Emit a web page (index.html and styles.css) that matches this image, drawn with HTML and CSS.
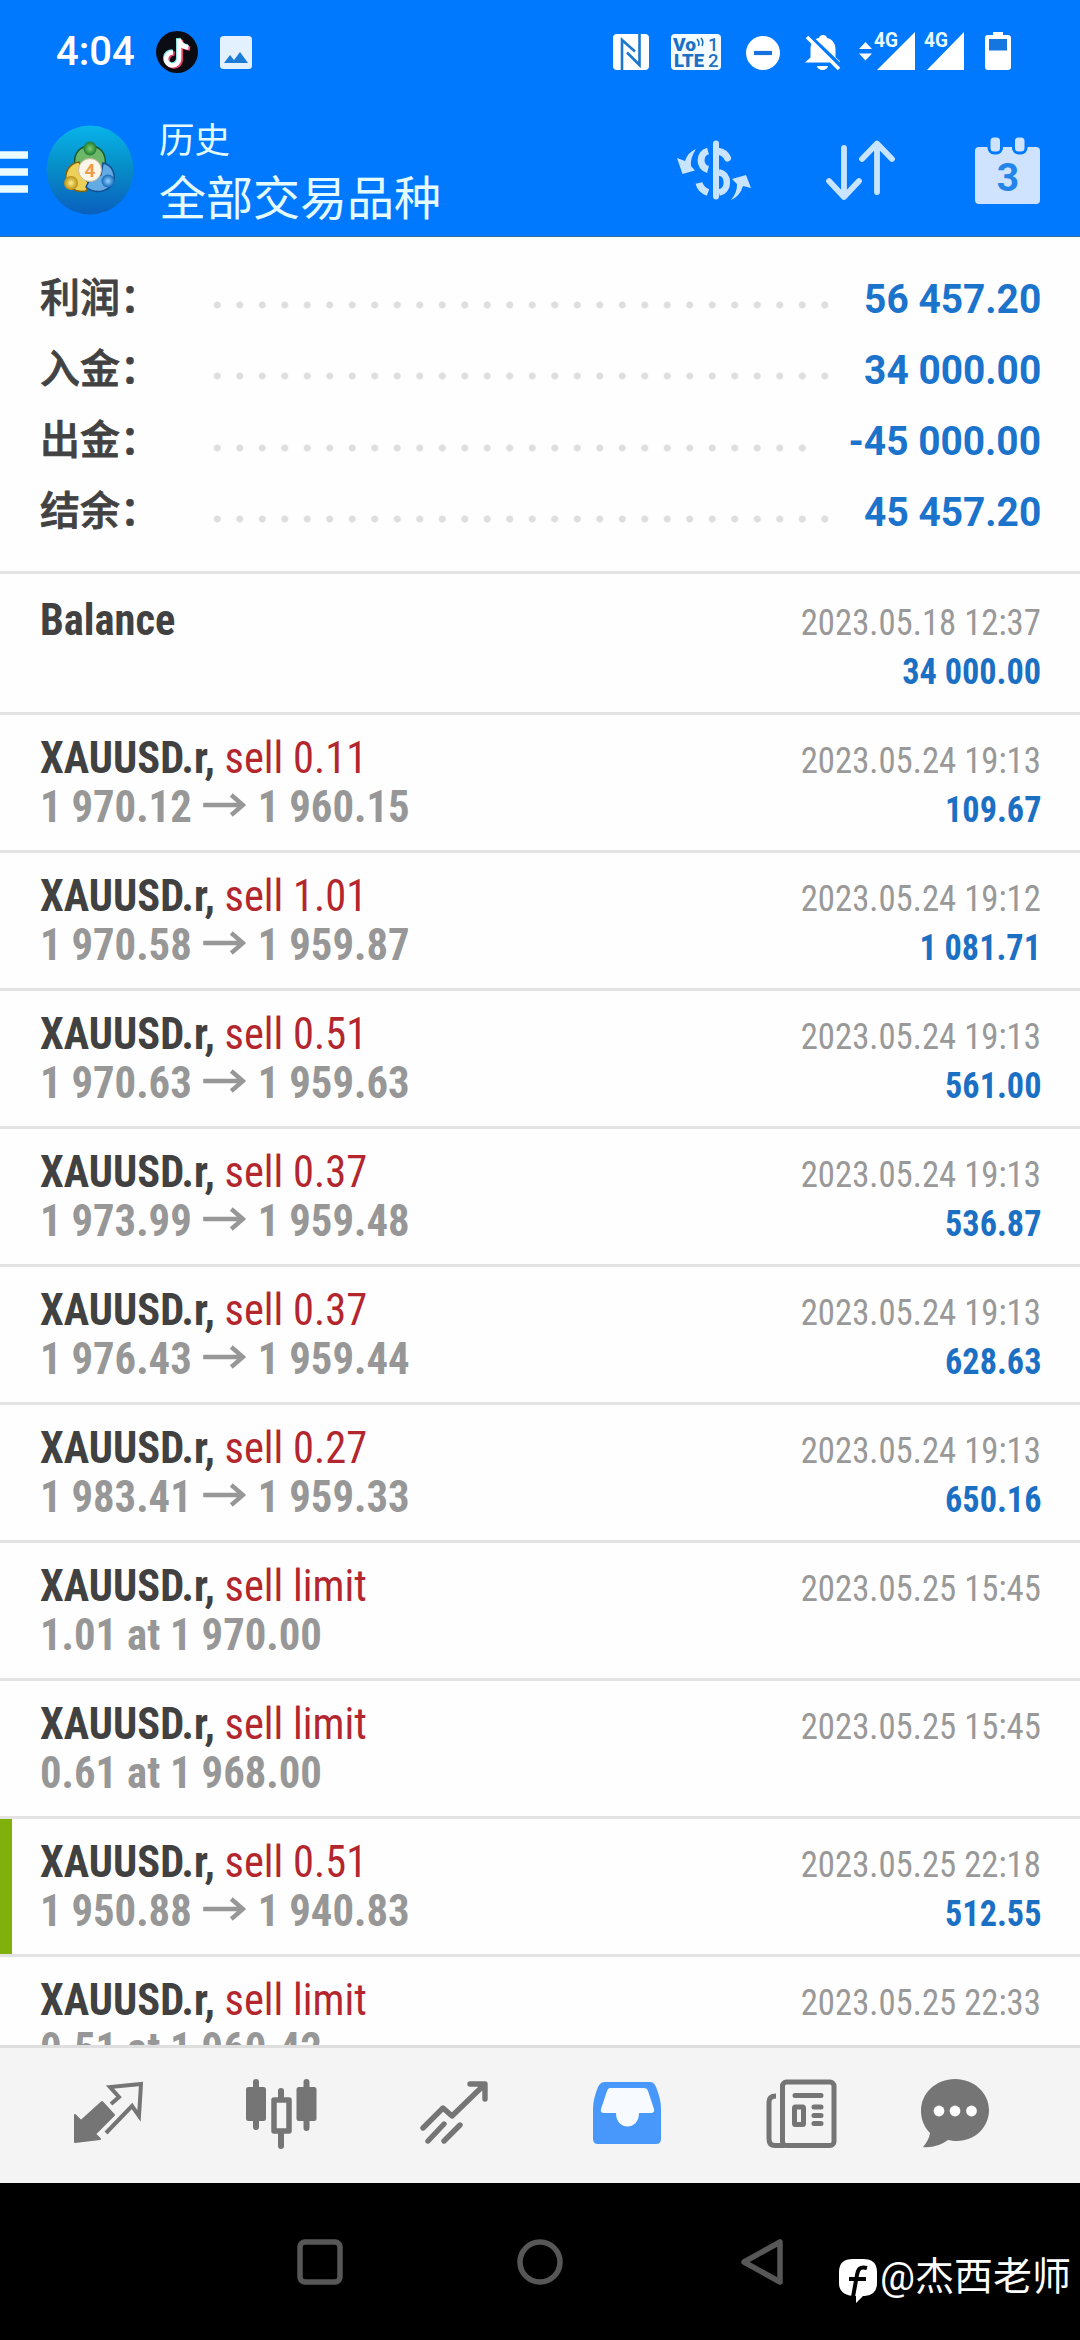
FILE: index.html
```html
<!DOCTYPE html>
<html lang="zh-CN">
<head>
<meta charset="utf-8">
<title>历史</title>
<link rel="stylesheet" href="styles.css">
</head>
<body>
<div class="screen">
  <header class="top">
    <div class="status">
      <span class="clock">4:04</span>
      <svg class="st-tiktok" width="42" height="42" viewBox="0 0 42 42"><circle cx="21" cy="21" r="21" fill="#0b0b14"/><g fill="none" stroke-width="4.6"><path d="M23.5 8v20a6.500 6.500 0 1 1-6-6.500M23.500 8c.500 5 4 8 9.500 8.500" stroke="#e8436b" transform="translate(1.200 1)"/><path d="M23.500 8v20a6.500 6.500 0 1 1-6-6.500M23.500 8c.500 5 4 8 9.500 8.500" stroke="#5fe0dc" transform="translate(-1.200 -1)"/><path d="M23 8v20a6.500 6.500 0 1 1-6-6.500M23 8c.500 5 4 8 9.500 8.500" stroke="#fff"/></g></svg>
      <svg class="st-picture" width="32" height="33" viewBox="0 0 32 33"><rect width="32" height="33" rx="3.500" fill="#e3f1ff"/><path d="M4 27l6-8 4 5 6-8 8 11z" fill="#1d7bd8"/></svg>
      <svg class="st-nfc" width="36" height="36" viewBox="0 0 36 36"><rect width="36" height="36" rx="4" fill="#fff"/><path d="M9 36V6l13 11.500M26.500 0V31L14 18.500" fill="none" stroke="#1c77cf" stroke-width="2.600"/></svg>
      <svg class="st-volte" width="50" height="36" viewBox="0 0 50 36"><rect width="50" height="36" rx="4" fill="#f3fbff"/><g fill="#1c70c4" font-family="Roboto, sans-serif"><text x="2" y="17" font-size="18.500" font-weight="900" textLength="23" lengthAdjust="spacingAndGlyphs">Vo</text><text x="3" y="32.500" font-size="18.500" font-weight="900" textLength="30" lengthAdjust="spacingAndGlyphs">LTE</text><text x="37" y="16.500" font-size="18.500" font-weight="500">1</text><text x="37" y="32.500" font-size="18.500" font-weight="500">2</text></g><path d="M26 5q3 4 1.500 7M30 4q3 4 1 8" fill="none" stroke="#1c70c4" stroke-width="1.600"/></svg>
      <svg class="st-dnd" width="34" height="34" viewBox="0 0 34 34"><circle cx="17" cy="17" r="17" fill="#fff"/><path d="M8 17h18" stroke="#1672dc" stroke-width="4.200"/></svg>
      <svg class="st-bell" width="36" height="36" viewBox="0 0 36 36"><path d="M0 27.500l5.500-5V14C5.500 7 10 3.500 14 3c.500-4 7.500-4 8 0 5 1 8.500 5 8.500 11v8l4.500 4.500v1z" fill="#fff"/><path d="M12 31h11a5.500 4 0 0 1-11 0z" fill="#fff"/><path d="M4 .500L36 31" stroke="#0179ff" stroke-width="4"/><path d="M2 2l32 32" stroke="#fff" stroke-width="3.600"/></svg>
      <svg class="st-signal" width="106" height="45" viewBox="0 -6 106 45"><path d="M0 17l6.500-7 6.500 7zM0 21.500h13L6.500 28.500z" fill="#fff"/><path d="M18 38L56 0v38zM68 38L105 0v38z" fill="#fff"/><g fill="#e8fbff" stroke="#0179ff" stroke-width="3" paint-order="stroke" font-family="Roboto, sans-serif" font-size="19.500" font-weight="700"><text x="15" y="15" textLength="24" lengthAdjust="spacingAndGlyphs">4G</text><text x="65" y="15" textLength="24" lengthAdjust="spacingAndGlyphs">4G</text></g></svg>
      <svg class="st-battery" width="26" height="38" viewBox="0 0 26 38"><path d="M8 0h10v3h5q3 0 3 3v29q0 3-3 3H3q-3 0-3-3V6q0-3 3-3h5z" fill="#fff"/><rect x="4" y="7" width="18" height="11.500" fill="#1676df"/></svg>
    </div>
    <div class="appbar">
      <svg class="menu" width="28" height="43" viewBox="0 0 28 43"><path d="M0 4h28M0 21h28M0 38h28" stroke="#eafcff" stroke-width="7.600"/></svg>
      <svg class="logo" width="88" height="90" viewBox="0 0 88 90">
        <defs>
          <linearGradient id="disc" x1="0" y1="0" x2="0" y2="1"><stop offset="0" stop-color="#08b4ea"/><stop offset=".45" stop-color="#078fc8"/><stop offset="1" stop-color="#0a5fbd"/></linearGradient>
          <radialGradient id="green"><stop offset="0" stop-color="#7fd06b"/><stop offset="1" stop-color="#1f7a35"/></radialGradient>
          <radialGradient id="gold"><stop offset="0" stop-color="#fff08a"/><stop offset="1" stop-color="#b98d10"/></radialGradient>
          <radialGradient id="sky"><stop offset="0" stop-color="#8fd4ff"/><stop offset="1" stop-color="#1667b8"/></radialGradient>
        </defs>
        <ellipse cx="44" cy="45" rx="43.500" ry="44.500" fill="url(#disc)"/>
        <path d="M29 40c-2-12 5-19 15-19s17 7 15 20l-2 5H32z" fill="#6db768" stroke="#14592e" stroke-width="1.500"/>
        <path d="M33 37c-8 1-14 8-13 17 1 8 9 14 20 12l3-7-6-8-2-10z" fill="#ecd058" stroke="#80630f" stroke-width="1.500"/>
        <path d="M57 38c9 2 12 10 11 17-2 10-17 16-28 7l3-6 12-6z" fill="#62abe4" stroke="#124f91" stroke-width="1.500"/>
        <ellipse cx="44" cy="23.500" rx="6.500" ry="7" fill="url(#green)"/>
        <ellipse cx="25" cy="58" rx="7" ry="7" fill="url(#gold)"/>
        <ellipse cx="62" cy="56" rx="6.500" ry="6.500" fill="url(#sky)"/>
        <circle cx="44" cy="45" r="11.500" fill="#fbf6ea" stroke="#c9b79a"/>
        <text x="44" y="51.500" text-anchor="middle" font-family="Roboto, sans-serif" font-size="19" font-weight="700" fill="#ef9a4f">4</text>
      </svg>
      <div class="titles"><div class="title">历史</div><div class="subtitle">全部交易品种</div></div>
      <svg class="act-currency" width="74" height="60" viewBox="0 0 74 60"><g fill="none" stroke="#c9e4ff"><path d="M39 3.500v53" stroke-width="6" stroke-linecap="round"/><path d="M31 11c-9 2.500-9.500 16 0 18.500M22 43c1 4.500 4 7.500 9 9.500" stroke-width="7"/><path d="M42 11.500q6 1 8.500 6.500" stroke-width="7" stroke-linecap="round"/><path d="M42 32.500c10 1 11 18 0 20" stroke-width="6.500"/></g><path d="M19 9q-8 3-11 12L0 18 5.500 34 18 30.500 14 26Q13 18 19 9zM54 60q9-4 12-14l8 2L69 35 55 39l5 5Q60.500 52 54 60z" fill="#c9e4ff"/></svg>
      <svg class="act-sort" width="70" height="61" viewBox="0 0 70 61"><path d="M18 8v48M3 41l15 16 15-16M51 52V4M36 19L51 3.500 66 19" fill="none" stroke="#c9e4ff" stroke-width="5.800" stroke-linecap="round" stroke-linejoin="round"/></svg>
      <svg class="act-calendar" width="66" height="67" viewBox="0 0 66 67"><rect x="0" y="10" width="65" height="57" rx="4" fill="#cfe3ff"/><g fill="#cfe3ff" stroke="#0179ff" stroke-width="3"><rect x="14" y="-1" width="12.500" height="17" rx="5"/><rect x="38.500" y="-1" width="12.500" height="17" rx="5"/></g><text x="33" y="54" text-anchor="middle" font-family="Roboto, sans-serif" font-size="39" font-weight="700" fill="#2384ea">3</text></svg>
    </div>
  </header>

  <section class="summary">
    <div class="sum-row"><span class="label">利润：</span><span class="dots"></span><span class="value">56 457.20</span></div>
    <div class="sum-row"><span class="label">入金：</span><span class="dots"></span><span class="value">34 000.00</span></div>
    <div class="sum-row"><span class="label">出金：</span><span class="dots dots-short"></span><span class="value">-45 000.00</span></div>
    <div class="sum-row"><span class="label">结余：</span><span class="dots"></span><span class="value">45 457.20</span></div>
  </section>

  <main class="list">
    <article class="deal deal-first"><div class="line"><span class="order symbol">Balance</span><time>2023.05.18 12:37</time></div><div class="line"><span class="profit">34 000.00</span></div></article>
    <article class="deal"><div class="line"><span class="order"><b class="symbol">XAUUSD.r,</b> <span class="side">sell 0.11</span></span><time>2023.05.24 19:13</time></div><div class="line"><span class="price">1 970.12<svg class="arrow" viewBox="0 0 44 24"><path d="M0 12h41M29 2l12 10-12 10"/></svg>1 960.15</span><span class="profit">109.67</span></div></article>
    <article class="deal"><div class="line"><span class="order"><b class="symbol">XAUUSD.r,</b> <span class="side">sell 1.01</span></span><time>2023.05.24 19:12</time></div><div class="line"><span class="price">1 970.58<svg class="arrow" viewBox="0 0 44 24"><path d="M0 12h41M29 2l12 10-12 10"/></svg>1 959.87</span><span class="profit">1 081.71</span></div></article>
    <article class="deal"><div class="line"><span class="order"><b class="symbol">XAUUSD.r,</b> <span class="side">sell 0.51</span></span><time>2023.05.24 19:13</time></div><div class="line"><span class="price">1 970.63<svg class="arrow" viewBox="0 0 44 24"><path d="M0 12h41M29 2l12 10-12 10"/></svg>1 959.63</span><span class="profit">561.00</span></div></article>
    <article class="deal"><div class="line"><span class="order"><b class="symbol">XAUUSD.r,</b> <span class="side">sell 0.37</span></span><time>2023.05.24 19:13</time></div><div class="line"><span class="price">1 973.99<svg class="arrow" viewBox="0 0 44 24"><path d="M0 12h41M29 2l12 10-12 10"/></svg>1 959.48</span><span class="profit">536.87</span></div></article>
    <article class="deal"><div class="line"><span class="order"><b class="symbol">XAUUSD.r,</b> <span class="side">sell 0.37</span></span><time>2023.05.24 19:13</time></div><div class="line"><span class="price">1 976.43<svg class="arrow" viewBox="0 0 44 24"><path d="M0 12h41M29 2l12 10-12 10"/></svg>1 959.44</span><span class="profit">628.63</span></div></article>
    <article class="deal"><div class="line"><span class="order"><b class="symbol">XAUUSD.r,</b> <span class="side">sell 0.27</span></span><time>2023.05.24 19:13</time></div><div class="line"><span class="price">1 983.41<svg class="arrow" viewBox="0 0 44 24"><path d="M0 12h41M29 2l12 10-12 10"/></svg>1 959.33</span><span class="profit">650.16</span></div></article>
    <article class="deal"><div class="line"><span class="order"><b class="symbol">XAUUSD.r,</b> <span class="side">sell limit</span></span><time>2023.05.25 15:45</time></div><div class="line"><span class="price">1.01 at 1 970.00</span></div></article>
    <article class="deal"><div class="line"><span class="order"><b class="symbol">XAUUSD.r,</b> <span class="side">sell limit</span></span><time>2023.05.25 15:45</time></div><div class="line"><span class="price">0.61 at 1 968.00</span></div></article>
    <article class="deal deal-marked"><div class="line"><span class="order"><b class="symbol">XAUUSD.r,</b> <span class="side">sell 0.51</span></span><time>2023.05.25 22:18</time></div><div class="line"><span class="price">1 950.88<svg class="arrow" viewBox="0 0 44 24"><path d="M0 12h41M29 2l12 10-12 10"/></svg>1 940.83</span><span class="profit">512.55</span></div></article>
    <article class="deal"><div class="line"><span class="order"><b class="symbol">XAUUSD.r,</b> <span class="side">sell limit</span></span><time>2023.05.25 22:33</time></div><div class="line"><span class="price">0.51 at 1 960.42</span></div></article>
  </main>

  <nav class="tabs">
    <svg width="72" height="72" viewBox="-2 0 72 72"><path d="M29 24L41 37 22 56l5 5L2 64V37l6 6z" fill="#757575" stroke="#757575" stroke-width="2" stroke-linejoin="round"/><path d="M38 26l8-7-9-10 31-3-2 32-7-10-26 27" fill="none" stroke="#757575" stroke-width="4"/></svg>
    <svg width="72" height="72" viewBox="0 0 72 72"><rect x="1" y="9" width="20" height="34" rx="2.500" fill="#757575"/><rect x="51.500" y="9" width="20" height="34" rx="2.500" fill="#757575"/><path d="M11 4v45M61.500 4v46M36 13v8M36 56v12" stroke="#757575" stroke-width="6" stroke-linecap="round"/><rect x="29" y="22" width="15" height="31" fill="none" stroke="#757575" stroke-width="5.500" stroke-linejoin="round"/></svg>
    <svg width="72" height="72" viewBox="0 0 72 72"><path d="M5 50L25 30l9 8L66 7M52 6h15v15M10 63l16-17M26 63l16-16" fill="none" stroke="#757575" stroke-width="5.400" stroke-linecap="round" stroke-linejoin="round"/></svg>
    <svg width="72" height="72" viewBox="0 0 72 72"><path d="M14 4h43c4 0 5 1 7 5 3 7 5 15 5 22v30q0 5-5 5H6q-5 0-5-5V31C1 24 3 16 6 9c2-4 4-5 8-5z" fill="#4798fa"/><path d="M18 10h34q3 0 4 3l6 18q1 4-3 4H47c0 18-23 18-23 0H12q-4 0-3-4l6-18q1-3 3-3z" fill="#f7fbff"/></svg>
    <svg width="72" height="72" viewBox="0 0 72 72"><g fill="none" stroke="#757575" stroke-width="5"><rect x="17.500" y="4" width="51.500" height="63.500" rx="4"/><path d="M11 18q-7 0-7 6v37q0 6.500 6 6.500h10"/><path d="M30 17.500h26M49 29h7M49 37.500h7M49 45.500h7" stroke-linecap="round"/><rect x="29.500" y="29" width="9" height="17.500" rx="1"/></g></svg>
    <svg width="72" height="72" viewBox="0 0 72 72"><path d="M36 1c19 0 34 14 34 31S56 63 38 63c-4 0-6-.500-9-1C22 67 13 70 4 69q6-7 7-14C5 49 2 41 2 33 2 15 17 1 36 1z" fill="#757575"/><g fill="#fff"><circle cx="20" cy="33" r="5.400"/><circle cx="36" cy="33" r="5.400"/><circle cx="52.500" cy="33" r="5.400"/></g></svg>
  </nav>

  <footer class="sysnav">
    <svg class="nav-recent" width="46" height="46" viewBox="0 0 46 46"><rect x="3" y="3" width="40" height="40" rx="5" fill="none" stroke="#575757" stroke-width="5.500"/></svg>
    <svg class="nav-home" width="46" height="46" viewBox="0 0 46 46"><circle cx="23" cy="23" r="20" fill="none" stroke="#575757" stroke-width="5.500"/></svg>
    <svg class="nav-back" width="44" height="48" viewBox="0 0 44 48"><path d="M40 4v40L4 24z" fill="none" stroke="#575757" stroke-width="5.500" stroke-linejoin="round"/></svg>
    <div class="credit"><svg width="38" height="44" viewBox="0 0 38 44"><path d="M14 0h10q14 0 14 13v11q0 12-12 13h-2l-7 7 0-7Q0 37 0 24V13Q0 0 14 0z" fill="#fff"/><path d="M28 9c-7-2-9 1-10 7l-4 22M10 20h17" fill="none" stroke="#000" stroke-width="4"/></svg><span>@杰西老师</span></div>
  </footer>
</div>
</body>
</html>
```
FILE: styles.css
```css
* { box-sizing: border-box; }
body { margin: 0; background: #000; }
svg { display: block; flex: none; }
.screen {
  width: 1080px; height: 2340px; overflow: hidden;
  display: flex; flex-direction: column;
  background: #fefefe;
  font-family: Roboto, "Noto Sans CJK SC", sans-serif;
}

/* header */
.top { height: 237px; flex: none; background: #0179ff; border-bottom: 1px solid #2b6ea8; }
.status { height: 104px; display: flex; align-items: center; padding-left: 56px; }
.clock { width: 100px; font-size: 40px; font-weight: 500; line-height: 48px; color: #fff; }
.st-picture { margin-left: 22px; }
.st-nfc { margin-left: 361px; }
.st-volte { margin-left: 22px; }
.st-dnd { margin-left: 25px; margin-top: 2px; }
.st-bell { margin-left: 25px; margin-top: 2px; }
.st-signal { margin-left: 18px; margin-top: -8px; }
.st-battery { margin-left: 20px; margin-top: -2px; }
.appbar { height: 132px; display: flex; align-items: center; }
.menu { margin-top: 4px; }
.logo { margin-left: 18px; }
.titles { margin-left: 25px; padding-top: 7px; width: 300px; color: #e4fbff; }
.title { font-size: 35.5px; line-height: 44px; }
.subtitle { font-size: 47px; line-height: 60px; margin-top: 6px; }
.act-currency { margin-left: 218px; }
.act-sort { margin-left: 75px; }
.act-calendar { margin-left: 79px; }

/* account totals */
.summary { height: 334px; flex: none; padding: 24px 39px 0 40px; }
.sum-row { height: 71.25px; display: flex; align-items: center; }
.label {
  width: 166px; flex: none; margin-top: -4px; white-space: nowrap;
  font-size: 40px; font-weight: 500; color: #424242; -webkit-text-stroke: 0.8px #424242;
}
.dots {
  width: 630px; height: 8px; flex: none; margin-top: 17px;
  background: radial-gradient(circle at center, #dedede 3px, transparent 4px) 0 0 / 22.5px 8px repeat-x;
}
.dots-short { width: 607.5px; }
.value {
  margin: 5px 0 0 auto; font-size: 40px; font-weight: 700; color: #1b73cb; white-space: nowrap;
  transform: scaleX(.972); transform-origin: right;
}

/* deals */
.list { flex: 1; min-height: 0; overflow: hidden; }
.deal { height: 138px; border-top: 3px solid #e3e3e3; padding: 19px 39px 0 40px; }
.deal-first { height: 141px; padding-top: 22px; }
.deal-marked { background: linear-gradient(#80b00b, #80b00b) 0 0 / 12px 100% no-repeat; }
.line {
  height: 49px; line-height: 49px; display: flex; justify-content: space-between; align-items: baseline;
  font-family: "Roboto Condensed", Roboto, sans-serif; font-stretch: 75%; font-size: 44px; white-space: nowrap;
}
.symbol { font-weight: 700; color: #414141; }
.side { color: #b3262d; }
.order { transform: scaleX(.965); transform-origin: left; }
.price { font-weight: 700; color: #979797; transform: scaleX(.971); transform-origin: left; }
.arrow { display: inline-block; width: 44px; height: 24px; margin: 0 12px; vertical-align: 5px; }
.arrow path { fill: none; stroke: #979797; stroke-width: 4.5px; }
.line time { font-size: 36px; color: #999; transform: scaleX(.965); transform-origin: right; }
.profit { margin-left: auto; font-size: 36px; font-weight: 700; color: #1b70c4; transform: scaleX(.95); transform-origin: right; }
.deal-first .profit { margin-top: 3px; }

/* tabs */
.tabs {
  height: 138px; flex: none; display: flex; gap: 101.5px; align-items: center;
  padding: 0 0 4px 71px; background: #f4f4f4; border-top: 3px solid #dedede;
}
.tabs svg:last-child { margin-left: -19.5px; }

/* system navigation */
.sysnav { height: 157px; flex: none; display: flex; align-items: center; padding-left: 297px; background: #000; }
.nav-home { margin-left: 174px; }
.nav-back { margin-left: 177px; }
.credit { margin: 38px 0 0 55px; display: flex; align-items: center; gap: 3px; color: #fff; font-size: 39px; line-height: 46px; white-space: nowrap; }
.credit span { margin-top: -7px; }
```
